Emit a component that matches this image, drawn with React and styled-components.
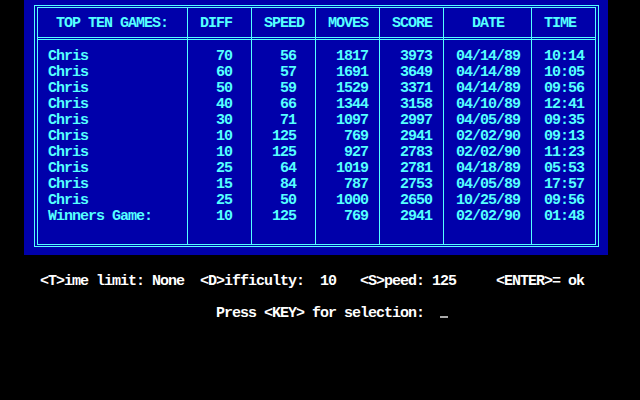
import React from "react";
import styled, { createGlobalStyle } from "styled-components";

const GlobalStyle = createGlobalStyle`
  html, body {
    margin: 0;
    padding: 0;
    background: #000;
  }
`;

const CYAN = "#55ffff";
const BLUE = "#0000aa";

const Screen = styled.div`
  width: 640px;
  height: 400px;
  overflow: hidden;
  background: #000;
  font-family: "Liberation Mono", "DejaVu Sans Mono", monospace;
  font-weight: bold;
  font-size: 15px;
  letter-spacing: -1px;
  line-height: 16px;
`;

const Panel = styled.div`
  box-sizing: border-box;
  width: 584px;
  height: 255px;
  margin-left: 24px;
  padding: 5px 9px 8px 10px;
  background: ${BLUE};
`;

const OuterFrame = styled.div`
  box-sizing: border-box;
  height: 100%;
  padding: 1px 2px;
  border: 1px solid ${CYAN};
`;

const InnerFrame = styled.div`
  box-sizing: border-box;
  height: 100%;
  border: 1px solid ${CYAN};
  display: grid;
  grid-template-columns: 150px 64px 64px 64px 64px 88px 63px;
`;

const Column = styled.div`
  box-sizing: border-box;
  display: flex;
  flex-direction: column;
  border-right: ${({ $last }) => ($last ? "none" : `1px solid ${CYAN}`)};
  color: ${CYAN};
`;

const HeadCell = styled.div`
  height: 29px;
  box-sizing: border-box;
  padding-top: 8px;
  padding-left: ${({ $pad }) => $pad}px;
  white-space: pre;
`;

const DoubleRule = styled.div`
  box-sizing: border-box;
  height: 3px;
  border-top: 1px solid ${CYAN};
  border-bottom: 1px solid ${CYAN};
`;

const Values = styled.div`
  flex: 1;
  padding-top: 9px;
  padding-left: ${({ $left }) => $left || 0}px;
  padding-right: ${({ $right }) => $right || 0}px;
  text-align: ${({ $align }) => $align};
`;

const Value = styled.div`
  height: 16px;
  white-space: pre;
`;

const Footer = styled.div`
  margin-top: 19px;
  color: #fff;
`;

const FooterLine = styled.div`
  white-space: pre;
  padding-left: ${({ $pad }) => $pad}px;
  margin-bottom: 16px;
`;

const Cursor = styled.span`
  display: inline-block;
  width: 8px;
  height: 2px;
  margin-left: 16px;
  vertical-align: -1px;
  background: #aaaaaa;
`;

const games = [
  ["Chris", "70", "56", "1817", "3973", "04/14/89", "10:14"],
  ["Chris", "60", "57", "1691", "3649", "04/14/89", "10:05"],
  ["Chris", "50", "59", "1529", "3371", "04/14/89", "09:56"],
  ["Chris", "40", "66", "1344", "3158", "04/10/89", "12:41"],
  ["Chris", "30", "71", "1097", "2997", "04/05/89", "09:35"],
  ["Chris", "10", "125", "769", "2941", "02/02/90", "09:13"],
  ["Chris", "10", "125", "927", "2783", "02/02/90", "11:23"],
  ["Chris", "25", "64", "1019", "2781", "04/18/89", "05:53"],
  ["Chris", "15", "84", "787", "2753", "04/05/89", "17:57"],
  ["Chris", "25", "50", "1000", "2650", "10/25/89", "09:56"],
  ["Winners Game:", "10", "125", "769", "2941", "02/02/90", "01:48"],
];

// header padding, and how the values sit in each column
const columns = [
  { title: "TOP TEN GAMES:", head: 18, align: "left", left: 10 },
  { title: "DIFF", head: 12, align: "right", right: 19 },
  { title: "SPEED", head: 12, align: "right", right: 19 },
  { title: "MOVES", head: 12, align: "right", right: 11 },
  { title: "SCORE", head: 12, align: "right", right: 11 },
  { title: "DATE", head: 28, align: "left", left: 12 },
  { title: "TIME", head: 12, align: "left", left: 12 },
];

export default function App() {
  return (
    <Screen>
      <GlobalStyle />
      <Panel>
        <OuterFrame>
          <InnerFrame>
            {columns.map((col, i) => (
              <Column key={col.title} $last={i === columns.length - 1}>
                <HeadCell $pad={col.head}>{col.title}</HeadCell>
                <DoubleRule />
                <Values $align={col.align} $left={col.left} $right={col.right}>
                  {games.map((row, r) => (
                    <Value key={r}>{row[i]}</Value>
                  ))}
                </Values>
              </Column>
            ))}
          </InnerFrame>
        </OuterFrame>
      </Panel>
      <Footer>
        <FooterLine $pad={40}>
          {"<T>ime limit: None  <D>ifficulty:  10   <S>peed: 125     <ENTER>= ok"}
        </FooterLine>
        <FooterLine $pad={216}>
          {"Press <KEY> for selection:"}
          <Cursor />
        </FooterLine>
      </Footer>
    </Screen>
  );
}
